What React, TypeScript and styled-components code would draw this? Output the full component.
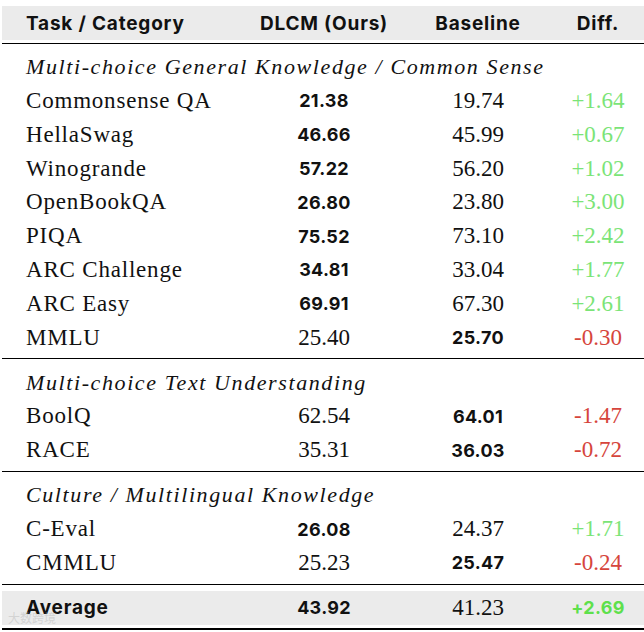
import React from "react";
import styled, { createGlobalStyle } from "styled-components";

const Global = createGlobalStyle`
  html, body { margin: 0; padding: 0; background: #ffffff; }
  body { width: 644px; height: 632px; overflow: hidden; }
`;

const COLS = "250px 144px 164px 76px";
const SANS = 'Inter, "Liberation Sans", sans-serif';
const SERIF = '"Liberation Serif", serif';

const Table = styled.div`
  position: relative;
  margin: 6px 0 0 2px;
  width: 642px;
  border-bottom: 2.5px solid #000;
`;

const HeaderWrap = styled.div`
  padding-bottom: 3px;
  border-bottom: 1.5px solid #000;
`;

const HeaderRow = styled.div`
  display: grid;
  grid-template-columns: ${COLS};
  height: 34px;
  align-items: center;
  background: #ebebeb;
`;

const HeadCell = styled.div<{ $left?: boolean }>`
  font-family: ${SANS};
  font-weight: 700;
  font-size: 19px;
  letter-spacing: 0.8px;
  color: #111;
  text-align: ${(p) => (p.$left ? "left" : "center")};
  padding-left: ${(p) => (p.$left ? "24px" : "0")};
  white-space: nowrap;
`;

const Group = styled.div`
  padding: 6.3px 0 4px;
  border-bottom: 1.5px solid #000;
`;

const SectionTitle = styled.div`
  height: 33.8px;
  display: flex;
  align-items: center;
  padding-left: 24px;
  font-family: ${SERIF};
  font-style: italic;
  font-size: 22px;
  letter-spacing: 1.6px;
  color: #111;
  white-space: nowrap;
`;

const Row = styled.div<{ $shaded?: boolean }>`
  display: grid;
  grid-template-columns: ${COLS};
  height: ${(p) => (p.$shaded ? "34px" : "33.8px")};
  align-items: center;
  background: ${(p) => (p.$shaded ? "#ebebeb" : "transparent")};
`;

const NameCell = styled.div<{ $bold?: boolean }>`
  padding-left: 24px;
  font-family: ${(p) => (p.$bold ? SANS : SERIF)};
  font-weight: ${(p) => (p.$bold ? 700 : 400)};
  font-size: ${(p) => (p.$bold ? "19px" : "23px")};
  letter-spacing: 0.8px;
  color: #111;
  white-space: nowrap;
`;

const NumCell = styled.div<{ $bold?: boolean; $tone?: "pos" | "neg" }>`
  text-align: center;
  font-family: ${(p) => (p.$bold ? SANS : SERIF)};
  font-weight: ${(p) => (p.$bold ? 700 : 400)};
  font-size: ${(p) => (p.$bold ? "18px" : "23px")};
  letter-spacing: ${(p) => (p.$bold ? "0.3px" : "0")};
  color: ${(p) =>
    p.$tone === "pos"
      ? p.$bold
        ? "#5ee04c"
        : "#7be477"
      : p.$tone === "neg"
      ? "#d6453c"
      : "#111"};
  white-space: nowrap;
`;

const AverageWrap = styled.div`
  padding: 6px 0 3px;
`;

const Watermark = styled.div`
  position: absolute;
  left: 6px;
  bottom: 2px;
  font-family: "Noto Sans CJK SC", sans-serif;
  font-size: 12px;
  color: rgba(190, 190, 190, 0.55);
  pointer-events: none;
`;

type R = { name: string; ours: string; base: string; diff: string; oursBold: boolean };

const groups: { title: string; rows: R[] }[] = [
  {
    title: "Multi-choice General Knowledge / Common Sense",
    rows: [
      { name: "Commonsense QA", ours: "21.38", base: "19.74", diff: "+1.64", oursBold: true },
      { name: "HellaSwag", ours: "46.66", base: "45.99", diff: "+0.67", oursBold: true },
      { name: "Winogrande", ours: "57.22", base: "56.20", diff: "+1.02", oursBold: true },
      { name: "OpenBookQA", ours: "26.80", base: "23.80", diff: "+3.00", oursBold: true },
      { name: "PIQA", ours: "75.52", base: "73.10", diff: "+2.42", oursBold: true },
      { name: "ARC Challenge", ours: "34.81", base: "33.04", diff: "+1.77", oursBold: true },
      { name: "ARC Easy", ours: "69.91", base: "67.30", diff: "+2.61", oursBold: true },
      { name: "MMLU", ours: "25.40", base: "25.70", diff: "-0.30", oursBold: false },
    ],
  },
  {
    title: "Multi-choice Text Understanding",
    rows: [
      { name: "BoolQ", ours: "62.54", base: "64.01", diff: "-1.47", oursBold: false },
      { name: "RACE", ours: "35.31", base: "36.03", diff: "-0.72", oursBold: false },
    ],
  },
  {
    title: "Culture / Multilingual Knowledge",
    rows: [
      { name: "C-Eval", ours: "26.08", base: "24.37", diff: "+1.71", oursBold: true },
      { name: "CMMLU", ours: "25.23", base: "25.47", diff: "-0.24", oursBold: false },
    ],
  },
];

export default function App() {
  return (
    <>
      <Global />
      <Table>
        <HeaderWrap>
          <HeaderRow>
            <HeadCell $left>Task / Category</HeadCell>
            <HeadCell>DLCM (Ours)</HeadCell>
            <HeadCell>Baseline</HeadCell>
            <HeadCell>Diff.</HeadCell>
          </HeaderRow>
        </HeaderWrap>
        {groups.map((g) => (
          <Group key={g.title}>
            <SectionTitle>{g.title}</SectionTitle>
            {g.rows.map((r) => (
              <Row key={r.name}>
                <NameCell>{r.name}</NameCell>
                <NumCell $bold={r.oursBold}>{r.ours}</NumCell>
                <NumCell $bold={!r.oursBold}>{r.base}</NumCell>
                <NumCell $tone={r.diff.startsWith("+") ? "pos" : "neg"}>{r.diff}</NumCell>
              </Row>
            ))}
          </Group>
        ))}
        <AverageWrap>
          <Row $shaded>
            <NameCell $bold>Average</NameCell>
            <NumCell $bold>43.92</NumCell>
            <NumCell>41.23</NumCell>
            <NumCell $bold $tone="pos">+2.69</NumCell>
          </Row>
        </AverageWrap>
        <Watermark>大数跨境</Watermark>
      </Table>
    </>
  );
}
